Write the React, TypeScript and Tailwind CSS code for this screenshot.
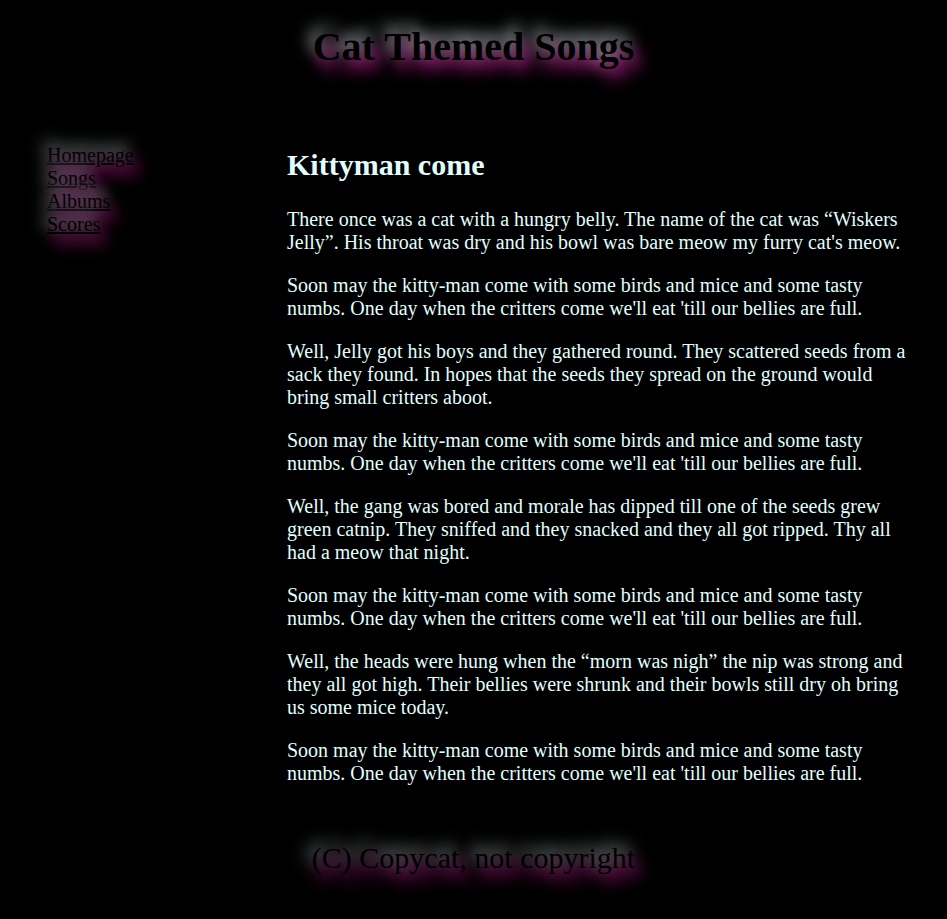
import React from "react";

const glow = "[text-shadow:-4px_-7px_16px_#b8caca,6px_9px_16px_#d0209c]";

const paragraphs: string[] = [
  "There once was a cat with a hungry belly. The name of the cat was \u201cWiskers Jelly\u201d. His throat was dry and his bowl was bare meow my furry cat's meow.",
  "Soon may the kitty-man come with some birds and mice and some tasty numbs. One day when the critters come we'll eat 'till our bellies are full.",
  "Well, Jelly got his boys and they gathered round. They scattered seeds from a sack they found. In hopes that the seeds they spread on the ground would bring small critters aboot.",
  "Soon may the kitty-man come with some birds and mice and some tasty numbs. One day when the critters come we'll eat 'till our bellies are full.",
  "Well, the gang was bored and morale has dipped till one of the seeds grew green catnip. They sniffed and they snacked and they all got ripped. Thy all had a meow that night.",
  "Soon may the kitty-man come with some birds and mice and some tasty numbs. One day when the critters come we'll eat 'till our bellies are full.",
  "Well, the heads were hung when the \u201cmorn was nigh\u201d the nip was strong and they all got high. Their bellies were shrunk and their bowls still dry oh bring us some mice today.",
  "Soon may the kitty-man come with some birds and mice and some tasty numbs. One day when the critters come we'll eat 'till our bellies are full.",
];

const links = ["Homepage", "Songs", "Albums", "Scores"];

export default function App() {
  return (
    <div className="min-h-[919px] bg-black font-['Liberation_Serif',serif] text-[20px] leading-[23px]">
      <header className="pt-6 text-center">
        <h1 className={`text-[40px] leading-[46px] font-bold text-black ${glow}`}>
          Cat Themed Songs
        </h1>
      </header>

      <div className="mt-[53px] flex">
        <nav className="w-[287px] shrink-0 pl-[47px] pt-[21px]">
          <ul className="flex flex-col">
            {links.map((l) => (
              <li key={l}>
                <a href="#" className={`text-black underline ${glow}`}>
                  {l}
                </a>
              </li>
            ))}
          </ul>
        </nav>

        <main className="w-[623px] text-[#e0ffff]">
          <h2 className="mt-[25px] mb-[26px] text-[30px] leading-[34px] font-bold">
            Kittyman come
          </h2>
          {paragraphs.map((p, i) => (
            <p key={i} className="mb-5">
              {p}
            </p>
          ))}
        </main>
      </div>

      <footer className="mt-[36px] pb-[43px] text-center">
        <p className={`text-[30px] leading-[34px] text-black ${glow}`}>
          (C) Copycat, not copyright
        </p>
      </footer>
    </div>
  );
}
